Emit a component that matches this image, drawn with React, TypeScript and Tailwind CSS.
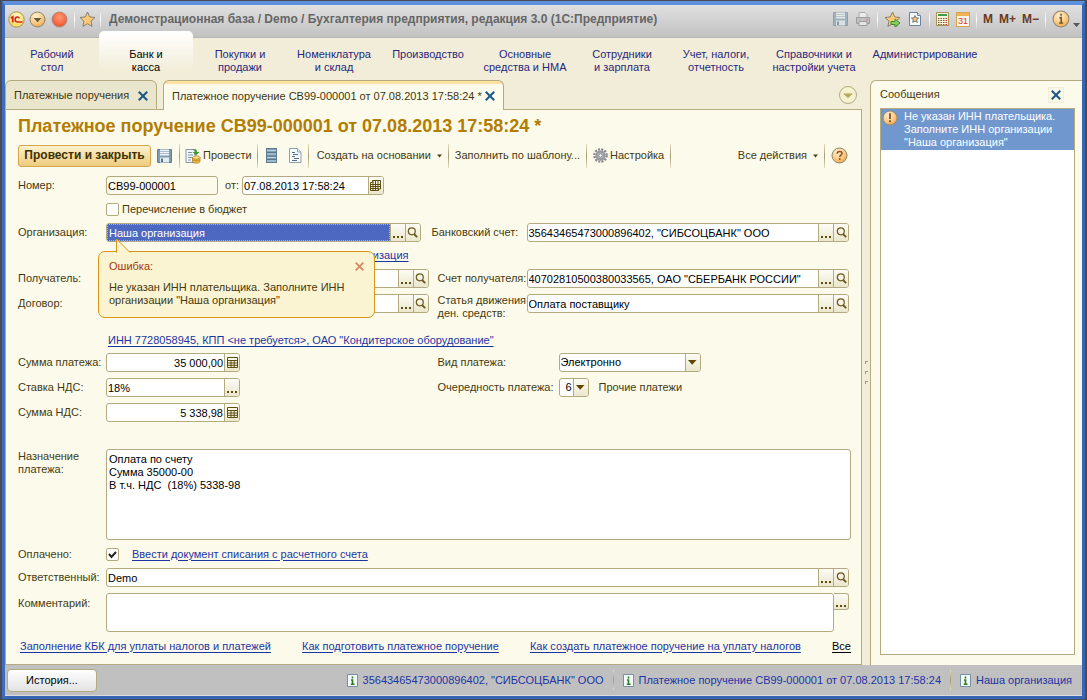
import type { ReactNode } from "react";

const line = "border-[#b3aa80]";
const face = "bg-linear-to-b from-[#fdfcf5] to-[#ebe7cd]";

function Sep({ tall = false }: { tall?: boolean }) {
  return (
    <span
      className={`w-px shrink-0 bg-linear-to-b from-[#e4dfc0] via-[#a39b70] to-[#e4dfc0] ${tall ? "h-6" : "h-5"}`}
    />
  );
}

function SaveIcon({ pale = false }: { pale?: boolean }) {
  return (
    <svg width="16" height="16" viewBox="0 0 16 16" className={pale ? "opacity-60" : ""}>
      <path d="M.5 1.500h14v13H.5z" fill="#7f9db1" stroke="#5f7f95" />
      <rect x="3" y="1.500" width="9" height="6" fill="#eef4f7" />
      <path d="M3 3.500h9M3 5.500h9" stroke="#a9bcc8" />
      <rect x="3" y="9.500" width="9" height="5" fill="#e4ecf0" />
      <rect x="4" y="10.500" width="2" height="3.500" fill="#55758b" />
    </svg>
  );
}

function PrinterIcon() {
  return (
    <svg width="16" height="16" viewBox="0 0 16 16" className="opacity-70">
      <path d="M4 7V1.500h6l2 2V7" fill="#f4f4f4" stroke="#999" />
      <path d="M1.500 6.500h13v6h-13z" fill="#b9b9b9" stroke="#888" />
      <path d="M4 10.500h8v4H4z" fill="#eee" stroke="#888" />
      <path d="M11 8.500h2" stroke="#d66" />
    </svg>
  );
}

function Star({ arrow = false }: { arrow?: boolean }) {
  return (
    <svg width="17" height="17" viewBox="0 0 17 17">
      <path
        d="M8.500 1l2.200 4.900 5.300.6-4 3.600 1.100 5.300-4.600-2.700-4.600 2.700L5 10.100l-4-3.600 5.300-.6z"
        fill="#fcc873"
        stroke="#87816f"
      />
      {arrow && <path d="M7 10.500h4V8l5 4-5 4v-2.500H7z" fill="#86d05c" stroke="#3f8d28" />}
    </svg>
  );
}

function StarPage() {
  return (
    <svg width="16" height="16" viewBox="0 0 16 16">
      <path d="M2.500 1.500h8l3 3v10h-11z" fill="#f7fafc" stroke="#6784a0" />
      <path d="M10.500 1.500v3h3" fill="#dfe8f0" stroke="#6784a0" />
      <path d="M8 4.500l1 2.400 2.600.2-2 1.700.7 2.600L8 10l-2.300 1.400.7-2.600-2-1.700 2.600-.2z" fill="#fcc873" stroke="#55606b" strokeWidth=".8" />
    </svg>
  );
}

function CalcSheet() {
  return (
    <svg width="14" height="16" viewBox="0 0 14 16">
      <rect x=".5" y="1.500" width="12" height="13" fill="#fbf3d9" stroke="#aa9158" />
      <rect x="2" y="3" width="9" height="2" fill="#3f9a48" />
      <path d="M2 7.500h1.500M4.500 7.500H6M7 7.500h1.500M2 9.500h1.500M4.500 9.500H6M7 9.500h1.500M2 11.500h1.500M4.500 11.500H6M7 11.500h1.500M2 13.500h1.500M4.500 13.500H6M7 13.500h1.500" stroke="#7a5d38" />
      <path d="M9.500 7.500H11M9.500 9.500H11M9.500 11.500H11M9.500 13.500H11" stroke="#cc3b2c" />
    </svg>
  );
}

function CalendarIcon() {
  return (
    <span className="flex h-[15px] w-[14px] flex-col border border-[#d4a455] bg-[#fdf6e6]">
      <span className="h-[3px] bg-[#f0b457]" />
      <span className="text-center text-[9px] leading-[10px] text-[#dd3528]">31</span>
    </span>
  );
}

function Orb({ children, size = 17 }: { children: ReactNode; size?: number }) {
  return (
    <svg width={size} height={size} viewBox="0 0 17 17">
      <defs>
        <radialGradient id="orb" cx=".4" cy=".3" r=".8">
          <stop offset="0" stopColor="#fff2d8" />
          <stop offset=".6" stopColor="#f9c67c" />
          <stop offset="1" stopColor="#ec9b3e" />
        </radialGradient>
      </defs>
      <circle cx="8.500" cy="8.500" r="7.500" fill="url(#orb)" stroke="#8f8672" />
      {children}
    </svg>
  );
}

function InfoOrb() {
  return (
    <Orb size={18}>
      <path d="M8.500 3.500v2M7 7.200h1.700v5M6.700 12.300h3.800" stroke="#6a5b20" strokeWidth="1.500" fill="none" />
    </Orb>
  );
}

function HelpOrb() {
  return (
    <Orb>
      <path d="M6.200 6.700c0-3 4.800-3 4.800-.2 0 1.700-2.300 1.700-2.300 3.600M8.700 11.300v1.600" stroke="#9b4a1d" strokeWidth="1.500" fill="none" />
    </Orb>
  );
}

function WarnOrb() {
  return (
    <Orb size={16}>
      <path d="M8.500 3.500v6M8.500 11v2" stroke="#7b3a10" strokeWidth="1.700" fill="none" />
    </Orb>
  );
}

function LogoIcon() {
  return (
    <svg width="17" height="17" viewBox="0 0 17 17">
      <defs>
        <radialGradient id="logo" cx=".5" cy=".3" r=".8">
          <stop offset="0" stopColor="#fffbd0" />
          <stop offset="1" stopColor="#f8cf3c" />
        </radialGradient>
      </defs>
      <circle cx="8.500" cy="8.500" r="7.700" fill="url(#logo)" stroke="#a8915c" />
      <path d="M2.800 7l2-1.200v5.700" stroke="#d8281c" strokeWidth="1.700" fill="none" />
      <path d="M11.300 7.400c-.5-2-4.200-1.800-4.200 1.100 0 1.700 1.100 2.500 2.600 2.500h4.800" stroke="#d8281c" strokeWidth="1.600" fill="none" />
    </svg>
  );
}

function MenuOrb() {
  return (
    <Orb>
      <path d="M4.500 7h8l-4 4.300z" fill="#6a5a3a" />
    </Orb>
  );
}

function CloseOrb() {
  return (
    <svg width="17" height="17" viewBox="0 0 17 17">
      <defs>
        <radialGradient id="red" cx=".5" cy=".35" r=".7">
          <stop offset="0" stopColor="#ff9a72" />
          <stop offset="1" stopColor="#f04c2c" />
        </radialGradient>
      </defs>
      <circle cx="8.500" cy="8.500" r="7.500" fill="url(#red)" stroke="#a78d80" />
    </svg>
  );
}

function Cross({ color, size }: { color: string; size: number }) {
  return (
    <svg width={size} height={size} viewBox="0 0 9 9">
      <path d="M.7.7l7.600 7.600M8.300.7L.7 8.300" stroke={color} strokeWidth="1.900" fill="none" />
    </svg>
  );
}

function PostIcon() {
  return (
    <svg width="16" height="16" viewBox="0 0 16 16">
      <path d="M1 1.500h9v13H1z" fill="#f3f7fa" stroke="#8298aa" />
      <path d="M3 4.500h4M3 7h5M3 9.500h4M3 12h3" stroke="#7f96a8" />
      <path d="M8 1c3-.4 4 .8 4 3h2.500L11 7.500 7.500 4H10c0-1.200-.5-2-2-2z" fill="#3e9c30" />
      <path d="M7.500 9.500v4.300c1 1.800 6.500 1.800 7.500 0V9.500z" fill="#f4bf42" stroke="#b07c18" strokeWidth=".8" />
      <ellipse cx="11.300" cy="9.500" rx="3.700" ry="1.600" fill="#fde69a" stroke="#b07c18" strokeWidth=".8" />
      <path d="M7.500 11.700c1.500 1.400 6 1.400 7.500 0" stroke="#b07c18" strokeWidth=".8" fill="none" />
    </svg>
  );
}

function StackIcon() {
  return (
    <svg width="12" height="15" viewBox="0 0 12 15">
      <rect x=".5" y=".5" width="10" height="14" fill="#83a3b8" stroke="#5d7b91" />
      <path d="M1 2.500h9M1 6h9M1 9.500h9M1 13h9" stroke="#b9cfdc" />
      <path d="M1 4.500h9M1 8h9M1 11.500h9" stroke="#587589" />
    </svg>
  );
}

function SheetIcon() {
  return (
    <svg width="13" height="15" viewBox="0 0 13 15">
      <path d="M.5.500h8l3.500 3.500v10.500H.5z" fill="#f6fafc" stroke="#8aa2b5" />
      <path d="M8.500.500v3.500H12" fill="#dde8f0" stroke="#8aa2b5" />
      <path d="M3 4.500h3M4 6.500h5M3 8.500h3M5 10.500h5M3 12.500h5" stroke="#50708a" />
    </svg>
  );
}

function GearIcon() {
  return (
    <svg width="15" height="15" viewBox="0 0 15 15">
      <circle cx="7.500" cy="7.500" r="6.200" fill="none" stroke="#85858c" strokeWidth="2.200" strokeDasharray="2 1.250" />
      <circle cx="7.500" cy="7.500" r="4" fill="#c5c5cb" stroke="#9a9aa1" strokeWidth="2.400" />
      <circle cx="7.500" cy="7.500" r="1.700" fill="#fcfaeb" stroke="#85858c" />
    </svg>
  );
}

function Caret() {
  return (
    <svg width="5" height="4" viewBox="0 0 5 4" className="shrink-0">
      <path d="M0 .500h5L2.500 3.500z" fill="#4a3e10" />
    </svg>
  );
}

function Magnifier() {
  return (
    <svg width="11" height="11" viewBox="0 0 11 11">
      <circle cx="4.800" cy="4.300" r="3.500" fill="none" stroke="#6b5a1e" strokeWidth="1.200" />
      <path d="M7 7l3.200 3.200" stroke="#6b5a1e" strokeWidth="1.900" />
    </svg>
  );
}

function Dots() {
  return (
    <svg width="10" height="11" viewBox="0 0 10 11">
      <path d="M0 9h2v2H0zM4 9h2v2H4zM8 9h2v2H8z" fill="#5e4d10" />
    </svg>
  );
}

function CalcIcon() {
  return (
    <svg width="11" height="11" viewBox="0 0 11 11">
      <path d="M.5.500h10v10H.5z" fill="#fbf8e6" stroke="#5e4d10" />
      <path d="M.5 3.500h10M.5 6h10M.5 8.300h10M4 3.500v7M7.200 3.500v7" stroke="#5e4d10" fill="none" />
    </svg>
  );
}

function DateIcon() {
  return (
    <svg width="11" height="11" viewBox="0 0 11 11">
      <path d="M2.500.500h8v8.500h-2v1.500h-8v-8h2z" fill="#fbf8e6" stroke="#5e4d10" />
      <path d="M.5 4.500h10M.5 6.500h10M.5 8.500h8M3 .500v10M5.500.500v10M8 .500v10" stroke="#5e4d10" fill="none" />
    </svg>
  );
}

function InfoPage() {
  return (
    <svg width="11" height="13" viewBox="0 0 11 13" className="shrink-0">
      <path d="M.5.500h10v12H.5z" fill="#f3f8fb" stroke="#7990a0" />
      <path d="M5.500 2.500v2M4 6h1.500v4M3.800 10.300h3.700" stroke="#2f7d22" strokeWidth="1.600" fill="none" />
    </svg>
  );
}

function FieldButton({ label, children }: { label: string; children: ReactNode }) {
  return (
    <button
      type="button"
      aria-label={label}
      className={`flex w-[15px] shrink-0 items-center justify-center self-stretch border-l last:rounded-r-[2px] ${line} ${face}`}
    >
      {children}
    </button>
  );
}

type FieldProps = {
  id: string;
  value: string;
  className?: string;
  right?: boolean;
  readOnly?: boolean;
  selected?: boolean;
  children?: ReactNode;
};

function Field({ id, value, className = "", right, readOnly, selected, children }: FieldProps) {
  return (
    <div
      className={`flex h-[19px] min-w-0 items-center rounded-[3px] border ${line} ${readOnly ? "bg-transparent" : "bg-white"} ${className}`}
    >
      <input
        id={id}
        type="text"
        defaultValue={value}
        readOnly={readOnly}
        className={`h-full w-full min-w-0 px-px outline-none ${right ? "text-right" : ""} ${
          selected ? "border border-dotted border-[#c9b95c] bg-[#4d68c0] text-white" : "text-black"
        }`}
      />
      {children}
    </div>
  );
}

function Pick() {
  return (
    <>
      <FieldButton label="Выбрать">
        <Dots />
      </FieldButton>
      <FieldButton label="Открыть">
        <Magnifier />
      </FieldButton>
    </>
  );
}

function DropDown({ id, options, className }: { id: string; options: string[]; className: string }) {
  return (
    <div className={`relative h-[19px] ${className}`}>
      <select id={id} className={`h-full w-full appearance-none rounded-[3px] border ${line} bg-white pl-px text-black`}>
        {options.map((o) => (
          <option key={o}>{o}</option>
        ))}
      </select>
      <span
        className={`pointer-events-none absolute inset-y-px right-px flex w-[15px] items-center justify-center rounded-r-[2px] border-l ${line} ${face}`}
      >
        <svg width="9" height="5" viewBox="0 0 9 5">
          <path d="M0 0h8.500L4.200 4.700z" fill="#5e4600" />
        </svg>
      </span>
    </div>
  );
}

const sections = [
  { text: "Рабочий\nстол", width: "w-[94px]" },
  { text: "Банк и\nкасса", width: "w-[94px]", active: true },
  { text: "Покупки и\nпродажи", width: "w-[94px]" },
  { text: "Номенклатура\nи склад", width: "w-[94px]" },
  { text: "Производство", width: "w-[94px]" },
  { text: "Основные\nсредства и НМА", width: "w-[100px]" },
  { text: "Сотрудники\nи зарплата", width: "w-[94px]" },
  { text: "Учет, налоги,\nотчетность", width: "w-[94px]" },
  { text: "Справочники и\nнастройки учета", width: "w-[102px]" },
  { text: "Администрирование", width: "w-[120px]" },
];

const row = "grid grid-cols-[88px_minmax(0,1fr)_98px_minmax(0,1fr)] items-center pr-0.5";
const wide = "grid grid-cols-[88px_minmax(0,1fr)]";
const link = "text-[#1d35a3] underline underline-offset-2";

function TitleSep() {
  return <span className="h-5 w-px bg-linear-to-b from-[#d0d0d0] via-white to-[#d0d0d0]" />;
}

function TitleBar() {
  return (
    <header className="flex h-[33px] shrink-0 items-center border-b border-[#b5b5b5] bg-linear-to-b from-[#e0e0e0] to-[#c2c2c2] pb-1 pl-[3px] pr-0.5">
      <button type="button" aria-label="Главное меню" className="mr-1"><LogoIcon /></button>
      <button type="button" aria-label="Меню" className="mr-[5px]"><MenuOrb /></button>
      <button type="button" aria-label="Закрыть" className="mr-1.5"><CloseOrb /></button>
      <TitleSep />
      <button type="button" aria-label="Избранное" className="mx-1"><Star /></button>
      <TitleSep />
      <h1 className="ml-2 min-w-0 flex-1 truncate text-[12px] font-bold text-[#666]">
        Демонстрационная база / Demo / Бухгалтерия предприятия, редакция 3.0 (1С:Предприятие)
      </h1>
      <div className="flex items-center gap-1.5">
        <button type="button" aria-label="Сохранить"><SaveIcon pale /></button>
        <button type="button" aria-label="Печать"><PrinterIcon /></button>
        <TitleSep />
        <button type="button" aria-label="Добавить в избранное"><Star arrow /></button>
        <button type="button" aria-label="Получить ссылку"><StarPage /></button>
        <TitleSep />
        <button type="button" aria-label="Калькулятор"><CalcSheet /></button>
        <button type="button" aria-label="Календарь"><CalendarIcon /></button>
        <TitleSep />
        <button type="button" className="text-[12px] font-bold text-[#6b3a1f]">M</button>
        <button type="button" className="text-[12px] font-bold text-[#6b3a1f]">M+</button>
        <button type="button" className="text-[12px] font-bold text-[#6b3a1f]">M−</button>
        <TitleSep />
        <button type="button" aria-label="Справка" className="flex items-end gap-[3px]">
          <InfoOrb />
          <svg width="7" height="5" viewBox="0 0 7 5"><path d="M0 0h7L3.500 4z" fill="#555" /></svg>
        </button>
      </div>
    </header>
  );
}

function Tabs() {
  return (
    <div className="flex h-[30px] shrink-0">
      <div className={`flex w-[152px] shrink-0 items-center justify-between rounded-t-[6px] border ${line} bg-[#eae5cd] px-2 pt-px`}>
        <button type="button" className="text-[#3f3510]">Платежные поручения</button>
        <button type="button" aria-label="Закрыть вкладку"><Cross color="#1f5a86" size={10} /></button>
      </div>
      <div className={`w-1.5 shrink-0 border-b ${line}`} />
      <div className={`flex w-[341px] shrink-0 items-center justify-between rounded-t-[6px] border border-b-0 ${line} bg-linear-to-b from-[#ffe1a0] from-[3px] to-[#fcfaeb] to-[3px] px-2 pt-px`}>
        <button type="button" className="whitespace-nowrap text-[#3f3510]">Платежное поручение СВ99-000001 от 07.08.2013 17:58:24 *</button>
        <button type="button" aria-label="Закрыть вкладку"><Cross color="#1f5a86" size={10} /></button>
      </div>
      <div className={`flex flex-1 items-center justify-end border-b pr-[5px] ${line}`}>
        <button type="button" aria-label="Список вкладок">
          <svg width="18" height="18" viewBox="0 0 18 18">
            <circle cx="9" cy="9" r="8.500" fill="#f6f1cf" stroke="#b3aa80" />
            <path d="M4 7.500h10l-5 4.500z" fill="#b3a763" />
          </svg>
        </button>
      </div>
    </div>
  );
}

function Toolbar() {
  return (
    <div className="mt-2 flex h-[23px] items-center whitespace-nowrap">
      <button type="button" className="h-[22px] w-[133px] shrink-0 rounded-[3px] border border-[#d3a64c] bg-linear-to-b from-[#fdf1cf] to-[#eecb7c] text-[12px] font-bold text-[#3f3000]">
        Провести и закрыть
      </button>
      <button type="button" aria-label="Записать" className="mx-1.5"><SaveIcon /></button>
      <Sep tall />
      <button type="button" className="mx-[5px] flex items-center gap-0.5"><PostIcon />Провести</button>
      <Sep tall />
      <button type="button" aria-label="Движения" className="ml-2"><StackIcon /></button>
      <button type="button" aria-label="Отчет" className="ml-[11px] mr-1.5"><SheetIcon /></button>
      <Sep tall />
      <button type="button" className="ml-2 mr-1.5 flex items-center gap-1.5">Создать на основании<Caret /></button>
      <Sep tall />
      <button type="button" className="mx-1.5">Заполнить по шаблону...</button>
      <Sep tall />
      <button type="button" className="mx-1.5 flex items-center gap-0.5"><GearIcon />Настройка</button>
      <Sep tall />
      <button type="button" className="ml-auto mr-1.5 flex items-center gap-1.5">Все действия<Caret /></button>
      <Sep tall />
      <button type="button" aria-label="Справка" className="ml-1.5 mr-[3px]"><HelpOrb /></button>
    </div>
  );
}

function ErrorCallout() {
  return (
    <div role="alert" className="absolute -left-2 top-[28px] z-10 h-[67px] w-[277px] rounded-[7px] border border-[#dc9416] bg-[#fbf4d2] px-[10px] pt-2">
      <svg width="16" height="15" viewBox="0 0 16 15" className="absolute -top-[14px] left-[17px]">
        <path d="M.5 14.500V1L14 14.500" fill="#fbf4d2" stroke="#dc9416" />
        <path d="M1 14.500h12.500" stroke="#fbf4d2" />
      </svg>
      <div className="flex items-center justify-between text-[#a8350c]">
        Ошибка:
        <button type="button" aria-label="Закрыть сообщение"><Cross color="#d58a63" size={9} /></button>
      </div>
      <p className="mt-2">Не указан ИНН плательщика. Заполните ИНН организации "Наша организация"</p>
    </div>
  );
}

function DocumentForm() {
  return (
    <form className="mt-[9px] flex flex-1 flex-col gap-1.5">
      <div className={wide}>
        <label htmlFor="number" className="self-center">Номер:</label>
        <div className="flex items-center">
          <Field id="number" value="СВ99-000001" readOnly className="w-28" />
          <label htmlFor="date" className="ml-[7px] mr-[3px]">от:</label>
          <Field id="date" value="07.08.2013 17:58:24" className="w-[142px]">
            <FieldButton label="Календарь"><DateIcon /></FieldButton>
          </Field>
        </div>
      </div>
      <label className="ml-[88px] flex h-4 items-center gap-[3px]">
        <input type="checkbox" className={`size-[13px] appearance-none rounded-[2px] border ${line} bg-white`} />
        Перечисление в бюджет
      </label>
      <div className={row}>
        <label htmlFor="org">Организация:</label>
        <div className="relative mr-2">
          <Field id="org" value="Наша организация" selected><Pick /></Field>
          <ErrorCallout />
        </div>
        <label htmlFor="bank" className="whitespace-nowrap pl-[3px]">Банковский счет:</label>
        <Field id="bank" value={'35643465473000896402, "СИБСОЦБАНК" ООО'}><Pick /></Field>
      </div>
      <div className={`${row} h-[15px]`}>
        <a href="#org" className={`${link} col-start-2 pr-5 text-right`}>ИНН не указан, КПП не указан, Наша организация</a>
      </div>
      <div className={row}>
        <label htmlFor="payee">Получатель:</label>
        <Field id="payee" value=""><Pick /></Field>
        <label htmlFor="payeeAccount" className="whitespace-nowrap pl-[9px]">Счет получателя:</label>
        <Field id="payeeAccount" value={'40702810500380033565, ОАО "СБЕРБАНК РОССИИ"'}><Pick /></Field>
      </div>
      <div className={row}>
        <label htmlFor="contract">Договор:</label>
        <Field id="contract" value=""><Pick /></Field>
        <label htmlFor="article" className="h-[19px] whitespace-nowrap pl-[9px]">Статья движения<br />ден. средств:</label>
        <Field id="article" value="Оплата поставщику"><Pick /></Field>
      </div>
      <div className="flex h-7 items-end pl-[90px]">
        <a href="#payee" className={link}>ИНН 7728058945, КПП &lt;не требуется&gt;, ОАО "Кондитерское оборудование"</a>
      </div>
      <div className={row}>
        <label htmlFor="sum">Сумма платежа:</label>
        <Field id="sum" value="35 000,00" right className="w-[134px]">
          <FieldButton label="Калькулятор"><CalcIcon /></FieldButton>
        </Field>
        <label htmlFor="kind" className="whitespace-nowrap pl-[9px]">Вид платежа:</label>
        <DropDown id="kind" options={["Электронно"]} className="ml-8 w-[142px]" />
      </div>
      <div className={row}>
        <label htmlFor="rate">Ставка НДС:</label>
        <Field id="rate" value="18%" className="w-[134px]">
          <FieldButton label="Выбрать"><Dots /></FieldButton>
        </Field>
        <label htmlFor="order" className="whitespace-nowrap pl-[9px]">Очередность платежа:</label>
        <div className="ml-8 flex items-center gap-2.5">
          <DropDown id="order" options={["6"]} className="w-[30px] [&>select]:pl-1.5" />
          Прочие платежи
        </div>
      </div>
      <div className={row}>
        <label htmlFor="vat">Сумма НДС:</label>
        <Field id="vat" value="5 338,98" right className="w-[134px]">
          <FieldButton label="Калькулятор"><CalcIcon /></FieldButton>
        </Field>
      </div>
      <div className={`${wide} mt-[21px] min-h-[91px] flex-1`}>
        <label htmlFor="purpose" className="pt-px">Назначение<br />платежа:</label>
        <textarea
          id="purpose"
          className={`h-full resize-none rounded-[3px] border ${line} bg-white px-0.5 pt-[3px] text-black outline-none`}
          defaultValue={"Оплата по счету\nСумма 35000-00\nВ т.ч. НДС  (18%) 5338-98"}
        />
      </div>
      <div className={`${wide} h-4 items-center`}>
        <label htmlFor="paid">Оплачено:</label>
        <div className="flex items-center">
          <span className="relative flex size-[13px]">
            <input id="paid" type="checkbox" defaultChecked className={`peer size-[13px] appearance-none rounded-[2px] border ${line} bg-white`} />
            <svg width="13" height="13" viewBox="0 0 13 13" className="pointer-events-none absolute inset-0 hidden peer-checked:block">
              <path d="M3 6l2.500 3L10 4" fill="none" stroke="#222" strokeWidth="2" />
            </svg>
          </span>
          <a href="#writeoff" className={`${link} ml-[13px]`}>Ввести документ списания с расчетного счета</a>
        </div>
      </div>
      <div className={`${wide} items-center pr-0.5`}>
        <label htmlFor="responsible">Ответственный:</label>
        <Field id="responsible" value="Demo"><Pick /></Field>
      </div>
      <div className={`${wide} pr-0.5`}>
        <label htmlFor="comment" className="pt-1">Комментарий:</label>
        <div className="flex items-start">
          <textarea id="comment" className={`h-[39px] flex-1 resize-none rounded-[3px] border ${line} bg-white outline-none`} />
          <button type="button" aria-label="Выбрать" className={`flex h-[17px] w-[15px] items-center justify-center rounded-r-[3px] border border-l-0 ${line} ${face}`}>
            <Dots />
          </button>
        </div>
      </div>
      <nav className="flex h-4 items-center justify-between pl-0.5">
        <a href="#kbk" className={link}>Заполнение КБК для уплаты налогов и платежей</a>
        <a href="#prepare" className={link}>Как подготовить платежное поручение</a>
        <a href="#create" className={link}>Как создать платежное поручение на уплату налогов</a>
        <a href="#all" className="text-black underline underline-offset-2">Все</a>
      </nav>
    </form>
  );
}

function Messages() {
  return (
    <aside className={`flex w-[212px] shrink-0 flex-col rounded-tl-[6px] border-l border-t ${line} bg-[#fcfaeb] pb-2.5 pl-[9px] pr-[7px]`}>
      <div className="flex h-[27px] items-center justify-between pr-[11px]">
        <h2>Сообщения</h2>
        <button type="button" aria-label="Закрыть сообщения" className="flex size-4 items-center justify-center border border-[#f2eeda] bg-[#f9f7e6]">
          <Cross color="#1f5a86" size={10} />
        </button>
      </div>
      <ul className={`flex-1 border ${line} bg-white`}>
        <li className="flex gap-1.5 bg-[#7098cf] pb-px pl-px pt-px text-white">
          <span className="shrink-0"><WarnOrb /></span>
          <span>Не указан ИНН плательщика. Заполните ИНН организации "Наша организация"</span>
        </li>
      </ul>
    </aside>
  );
}

function StatusBar() {
  return (
    <footer className="flex h-[31px] shrink-0 items-center justify-between border-b border-[#dcdcdc] bg-[#c0c0c0] pl-[2px] pr-[10px] text-[#1d35a3]">
      <button type="button" className={`h-[23px] w-[90px] rounded-[4px] border ${line} bg-linear-to-b from-white to-[#e2e2e2] text-black`}>История...</button>
      <div className="flex items-center gap-[9px]">
        <a href="#account" className="flex items-center gap-[5px]"><InfoPage />35643465473000896402, "СИБСОЦБАНК" ООО</a>
        <Sep />
        <a href="#order" className="flex items-center gap-[5px]"><InfoPage />Платежное поручение СВ99-000001 от 07.08.2013 17:58:24</a>
        <Sep />
        <a href="#org" className="flex items-center gap-[5px]"><InfoPage />Наша организация</a>
      </div>
    </footer>
  );
}

export default function App() {
  return (
    <div className="flex min-h-screen flex-col border-x-2 border-y border-[#4a4a55] font-['Liberation_Sans',Arial,sans-serif] text-[11px] leading-[13px] text-[#463a10]">
      <div className="flex flex-1 flex-col border-x-[3px] border-b-[3px] border-t-[4px] border-b-[#3766b5] border-l-[#3f6dbd] border-r-[#3766b5] border-t-[#5f90dc] bg-[#f2edd9]">
        <TitleBar />
        <nav className="flex h-[42px] shrink-0">
          {sections.map((s) => (
            <a
              key={s.text}
              href="#section"
              className={`shrink-0 whitespace-pre-line text-center ${s.width} ${
                s.active
                  ? "-mt-[7px] rounded-t-[5px] bg-linear-to-b from-white to-[#f2edd9] to-80% pt-[17px] text-black"
                  : "pt-2.5 text-[#28287c]"
              }`}
            >
              {s.text}
            </a>
          ))}
        </nav>
        <div className="flex flex-1">
          <div className="flex min-w-0 flex-1 flex-col">
            <Tabs />
            <main className={`flex flex-1 flex-col border-x border-b ${line} bg-[#fcfaeb] pb-2.5 pl-3 pr-2.5`}>
              <h2 className="mt-[7px] text-[18px] font-bold leading-[19px] text-[#b27d00]">
                Платежное поручение СВ99-000001 от 07.08.2013 17:58:24 *
              </h2>
              <Toolbar />
              <DocumentForm />
            </main>
          </div>
          <div className="flex w-2 shrink-0 flex-col items-center justify-center gap-[7px]">
            <span className="size-[3px] border-l border-t border-[#a39b78]" />
            <span className="size-[3px] border-l border-t border-[#a39b78]" />
            <span className="size-[3px] border-l border-t border-[#a39b78]" />
          </div>
          <Messages />
        </div>
        <StatusBar />
      </div>
    </div>
  );
}
